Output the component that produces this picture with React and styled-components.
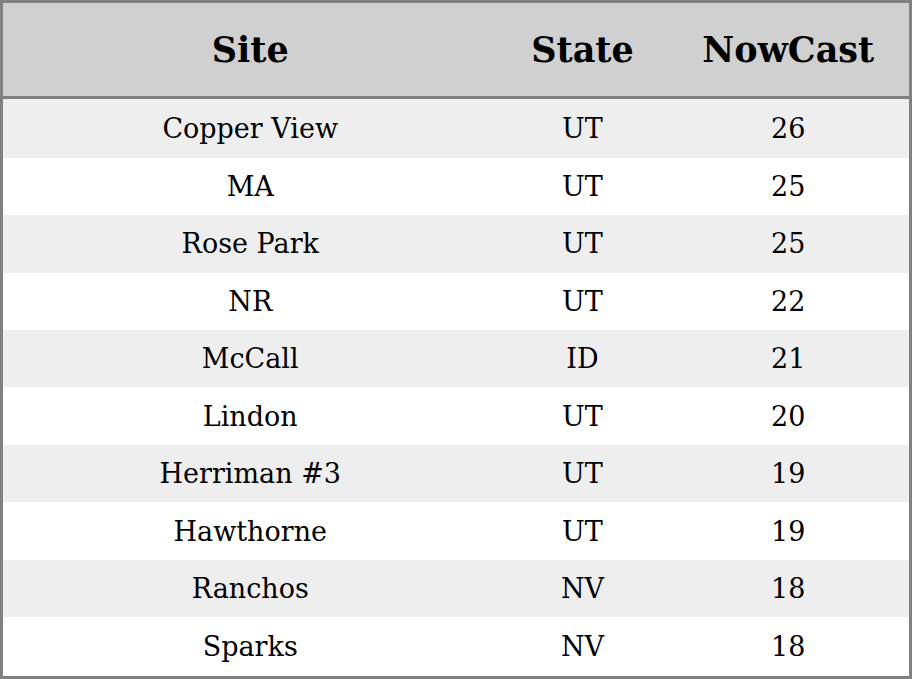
import styled, { createGlobalStyle } from 'styled-components';

const rows = [
  ['Copper View', 'UT', 26],
  ['MA', 'UT', 25],
  ['Rose Park', 'UT', 25],
  ['NR', 'UT', 22],
  ['McCall', 'ID', 21],
  ['Lindon', 'UT', 20],
  ['Herriman #3', 'UT', 19],
  ['Hawthorne', 'UT', 19],
  ['Ranchos', 'NV', 18],
  ['Sparks', 'NV', 18],
];

export default function App() {
  return (
    <>
      <Global />
      <Table>
        <colgroup>
          <Col $width={496} />
          <Col $width={170} />
          <Col />
        </colgroup>
        <thead>
          <tr>
            <Th>Site</Th>
            <Th>State</Th>
            <Th>NowCast</Th>
          </tr>
        </thead>
        <tbody>
          {rows.map(([site, state, value], i) => (
            <Row key={site} $striped={i % 2 === 0}>
              <Td>{site}</Td>
              <Td>{state}</Td>
              <Td>{value}</Td>
            </Row>
          ))}
        </tbody>
      </Table>
    </>
  );
}

const Global = createGlobalStyle`
  html, body {
    margin: 0;
    padding: 0;
    background: #FFFFFF;
  }
`;

const Table = styled.table`
  width: 912px;
  height: 679px;
  border-collapse: collapse;
  border: 3px solid #808080;
  table-layout: fixed;
  font-family: 'DejaVu Serif', serif;
  color: #000000;
`;

const Col = styled.col`
  width: ${(p) => (p.$width ? `${p.$width}px` : 'auto')};
`;

const Th = styled.th`
  height: 93px;
  padding: 0;
  background: #D0D0D0;
  border-bottom: 3px solid #808080;
  font-size: 35px;
  font-weight: 700;
  text-align: center;
`;

const Row = styled.tr`
  background: ${(p) => (p.$striped ? '#EEEEEE' : '#FFFFFF')};
`;

const Td = styled.td`
  padding: 0;
  font-size: 27px;
  text-align: center;
`;
